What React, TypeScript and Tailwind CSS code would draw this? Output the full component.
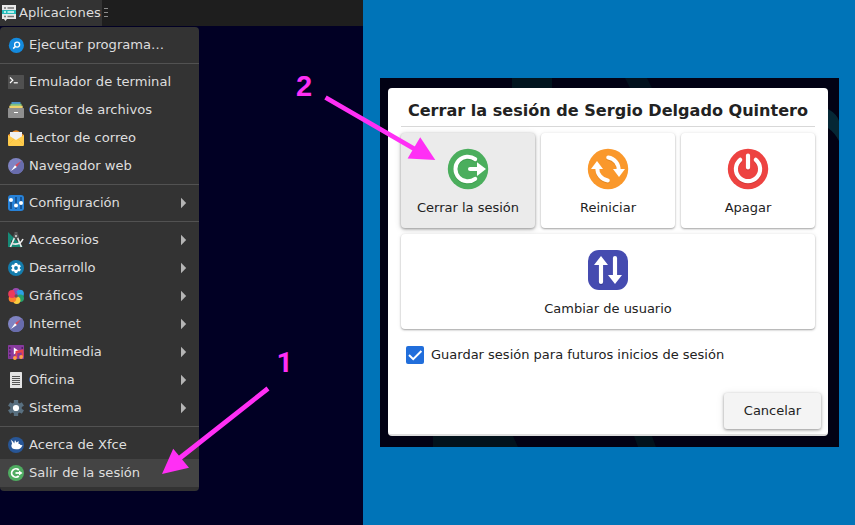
import React from "react";

const SANS = "font-['DejaVu_Sans','Liberation_Sans',sans-serif]";

type IconName =
  | "search" | "terminal" | "files" | "mail" | "compass" | "settings" | "accessories"
  | "dev" | "graphics" | "media" | "office" | "system" | "xfce" | "logout";

function MenuIcon({ name }: { name: IconName }) {
  return (
    <svg viewBox="0 0 16 16" className="h-4 w-4 shrink-0">
      {name === "search" && (
        <>
          <circle cx="8.4" cy="8.4" r="7.6" fill="#148ade" />
          <circle cx="9.1" cy="7.6" r="2.5" fill="none" stroke="#fff" strokeWidth="1.3" />
          <path d="M7.3 9.5 5.2 11.6" stroke="#fff" strokeWidth="1.5" />
        </>
      )}
      {name === "terminal" && (
        <>
          <rect x="0" y="1" width="16" height="14" rx=".5" fill="#505050" />
          <path d="M2 3.5 4.8 6.3 2 9" fill="none" stroke="#fff" strokeWidth="1.2" />
          <path d="M5.8 8.8h4" stroke="#fff" strokeWidth="1.2" />
        </>
      )}
      {name === "files" && (
        <>
          <path d="M3.5 0h9v3h-9z" fill="#4b91ca" />
          <path d="M2.4 1.8h11.2v3H2.4z" fill="#79c083" />
          <path d="M1.3 3.7h13.4V7H1.3z" fill="#edd16a" />
          <rect y="6" width="16" height="10" rx=".7" fill="#8f8f8f" />
          <path d="M6 10.5h4" stroke="#fff" strokeWidth="1" />
        </>
      )}
      {name === "mail" && (
        <>
          <path d="M0 5 6 .8Q8-.5 10 .8L16 5v9H0z" fill="#e98c28" />
          <path d="M2 2h12v9H2z" fill="#f1f1f1" />
          <path d="M0 5 8 10l8-5v10q0 1-1 1H1q-1 0-1-1z" fill="#ffcc4d" />
          <path d="m0 15 6-6M16 15l-6-6" stroke="#f5bc39" strokeWidth=".6" />
        </>
      )}
      {name === "compass" && (
        <>
          <circle cx="8" cy="8" r="8" fill="#7f83c2" />
          <path d="M2.3 13.7a8 8 0 0 0 11.4 0 8 8 0 0 0 0-11.4z" fill="#686cac" />
          <path d="M13 3 7 7.2 8.8 9z" fill="#d8485a" />
          <path d="M3 13 7 7.2 8.8 9z" fill="#fff" />
        </>
      )}
      {name === "settings" && (
        <>
          <rect width="16" height="16" rx="3" fill="#2782d8" />
          <path d="M3 6v8M8 2v8M13 2v5M8 12v2M13 9v5" stroke="#154f8e" strokeWidth="1.8" />
          <circle cx="3" cy="5" r="2" fill="#fff" />
          <circle cx="8" cy="10.5" r="2" fill="#fff" />
          <circle cx="13" cy="8" r="2" fill="#fff" />
        </>
      )}
      {name === "accessories" && (
        <>
          <path d="M0 0 15 15H0z" fill="#168b78" />
          <path d="M3 8v4h4z" fill="#333" />
          <path d="M8 0v5" stroke="#5f5f5f" strokeWidth="3" />
          <path d="M7.3 4 2.4 15M8.8 4l4.6 11" stroke="#e8e8e8" strokeWidth="1.7" />
          <path d="M4.5 11.7Q12 13.5 15 7" fill="none" stroke="#eee" strokeWidth="1.6" />
          <circle cx="8" cy="4" r="2.6" fill="#555" />
          <circle cx="8" cy="4" r=".9" fill="#eee" />
        </>
      )}
      {name === "dev" && (
        <>
          <circle cx="8" cy="8" r="8" fill="#147cac" />
          <path d="M8 3v10M3.7 5.5l8.6 5M3.7 10.5l8.6-5" stroke="#fff" strokeWidth="2.6" />
          <circle cx="8" cy="8" r="3.9" fill="#fff" />
          <circle cx="8" cy="8" r="1.9" fill="#147cac" />
        </>
      )}
      {name === "graphics" && (
        <>
          <circle cx="8" cy="4" r="3.9" fill="#9a4bb0" />
          <circle cx="12" cy="5.7" r="3.9" fill="#2ca1e4" />
          <circle cx="12.3" cy="10.2" r="3.7" fill="#24a16e" />
          <circle cx="8.7" cy="12.3" r="3.7" fill="#f9cb3e" />
          <circle cx="4.5" cy="10.5" r="3.8" fill="#fa812e" />
          <circle cx="4.1" cy="6" r="3.9" fill="#ec3a5c" />
          <path d="M6 2.6a3.9 3.9 0 0 1 3.5 4.5L8 8z" fill="#7956bd" />
          <circle cx="8.2" cy="8" r="1.7" fill="#704e54" />
        </>
      )}
      {name === "media" && (
        <>
          <rect y="1" width="16" height="14" rx=".7" fill="#873a9e" />
          <path d="M1.8 3v11M14.2 3v5" stroke="#4e2261" strokeWidth="1.4" strokeDasharray="2 1.6" />
          <path d="M5.8 3.5 11 7l-5.2 3.5z" fill="#fff" />
          <path d="M8.4 14V7.8L14.6 6.4v6.5M8.4 8.6l6.2-1.4" fill="none" stroke="#e6434c" strokeWidth="1.8" />
          <circle cx="6.9" cy="14" r="1.9" fill="#ffa044" />
          <circle cx="13.1" cy="13" r="1.9" fill="#ffa044" />
        </>
      )}
      {name === "office" && (
        <>
          <rect x="2" width="12" height="16" rx=".6" fill="#e4e4e4" />
          <path d="M4 4.5h8M4 6.5h8M4 8.5h8M4 10.5h8M4 12.5h8" stroke="#444" strokeWidth=".9" />
        </>
      )}
      {name === "system" && (
        <>
          <path d="M8 0v16M1.1 4l13.8 8M1.1 12l13.8-8" stroke="#597080" strokeWidth="4.3" />
          <circle cx="8" cy="8" r="5.8" fill="#597080" />
          <circle cx="8" cy="8" r="3.1" fill="#fff" />
        </>
      )}
      {name === "xfce" && (
        <>
          <circle cx="8" cy="8" r="8" fill="#285696" />
          <path d="m3 2.8 2.2 2 1 1.8L7 3l1.5 2.6L10.6 4l-.1 2.7c1 .1 1.5.5 2 1.2l2 .4-1.3 2.2C12 12 10.5 12.4 8 12.3c-3 0-4.5-1.3-4.7-3.6L4 6.5z" fill="#fff" />
        </>
      )}
      {name === "logout" && (
        <>
          <circle cx="8" cy="8" r="8" fill="#4fac61" />
          <path d="M10.8 5A4.2 4.2 0 1 0 10.8 11" fill="none" stroke="#fff" strokeWidth="1.8" />
          <path d="M7.5 8h4" stroke="#fff" strokeWidth="1.8" />
          <path d="M11 5.4 14.5 8 11 10.6z" fill="#fff" />
        </>
      )}
    </svg>
  );
}

function Item({ icon, label, sub, active }: { icon: IconName; label: string; sub?: boolean; active?: boolean }) {
  return (
    <div className={`flex h-7 items-center pl-2 pr-3 ${active ? "bg-[#444444]" : ""}`}>
      <MenuIcon name={icon} />
      <span className="ml-[5px] flex-1 whitespace-nowrap pb-px">{label}</span>
      {sub && (
        <svg viewBox="0 0 6 12" className="h-3 w-[6px]">
          <path d="M0 .8 5.2 6 0 11.2z" fill="#b5b5b5" />
        </svg>
      )}
    </div>
  );
}

function Separator() {
  return (
    <div className="flex h-[9px] items-center">
      <div className="h-px w-full bg-[#525252]" />
    </div>
  );
}

function Card({ label, active, children }: { label: string; active?: boolean; children: React.ReactNode }) {
  return (
    <div
      className={`flex h-[95px] flex-col items-center rounded-[4px] pt-[15px] ${active ? "bg-[#ebebeb] shadow-[0_1px_3px_rgba(0,0,0,0.38),0_1px_7px_rgba(0,0,0,0.14)]" : "bg-white shadow-[0_1px_2px_rgba(0,0,0,0.34),0_0_5px_rgba(0,0,0,0.07)]"}`}
    >
      <svg viewBox="0 0 42 42" className="h-[42px] w-[42px]">{children}</svg>
      <span className="mt-[9px] whitespace-nowrap leading-[18px]">{label}</span>
    </div>
  );
}

function LogoutDialog() {
  return (
    <div className="relative ml-[17px] mt-[78px] h-[369px] w-[459px] bg-[#020214] pl-2 pt-[10px]">
      <svg viewBox="0 0 459 369" className="absolute inset-0 h-full w-full">
        <path d="M132 0h40v10h-40z" fill="#02151f" />
        <path d="M245 0h22l5 10h-22z" fill="#02111d" />
        <path d="M448 31q9 5 11 12v20q-4-8-11-13z" fill="#052735" />
        <path d="M53 358h80l5 11H53zM254 358h18l4 11h-18z" fill="#02121c" />
      </svg>
      <div className="relative flex h-[348px] w-[440px] flex-col rounded-[4px] border-b-2 border-[#dedede] bg-white px-[13px] text-[13px] text-[#222222]">
        <h1 className="flex h-[39px] items-center justify-center whitespace-nowrap border-b border-[#d8d8d8] pt-[8px] text-[16.07px] font-bold leading-[20px]">
          Cerrar la sesión de Sergio Delgado Quintero
        </h1>
        <div className="mt-[6px] grid grid-cols-3 gap-[6px]">
          <Card label="Cerrar la sesión" active>
            <circle cx="21" cy="21" r="20.2" fill="#4bae5d" />
            <path d="M28.2 11.2A12.3 12.3 0 1 0 28.2 30.8" transform="translate(0 1)" fill="none" stroke="#278438" strokeOpacity=".4" strokeWidth="4" strokeLinecap="round" />
            <path d="M28.2 11.2A12.3 12.3 0 1 0 28.2 30.8" fill="none" stroke="#fff" strokeWidth="4" strokeLinecap="round" />
            <path d="M23 21h9" stroke="#fff" strokeWidth="4" strokeLinecap="round" />
            <path d="m30 14.3 9 6.7-9 7z" fill="#fff" />
          </Card>
          <Card label="Reiniciar">
            <circle cx="21" cy="21" r="20.2" fill="#fa982b" />
            <path d="M10.4 19.5A12 12 0 0 0 20.8 32.5M21.2 9.5A12 12 0 0 1 31.6 22.5" transform="translate(0 1)" fill="none" stroke="#b96b12" strokeOpacity=".4" strokeWidth="4" strokeLinecap="round" />
            <path d="M10.4 19.5A12 12 0 0 0 20.8 32.5M21.2 9.5A12 12 0 0 1 31.6 22.5" fill="none" stroke="#fff" strokeWidth="4" strokeLinecap="round" />
            <path d="m10 13 6 8H4zM32 29l6-8H26z" fill="#fff" />
          </Card>
          <Card label="Apagar">
            <circle cx="21" cy="21" r="20.2" fill="#ed4341" />
            <path d="M13.2 11.8A12.1 12.1 0 1 0 28.8 11.8M21 7.5v12" transform="translate(0 1)" fill="none" stroke="#a92525" strokeOpacity=".4" strokeWidth="4.2" strokeLinecap="round" />
            <path d="M13.2 11.8A12.1 12.1 0 1 0 28.8 11.8M21 7.5v12" fill="none" stroke="#fff" strokeWidth="4.2" strokeLinecap="round" />
          </Card>
        </div>
        <div className="mt-[6px]">
          <Card label="Cambiar de usuario">
            <rect x="1" y="1" width="40" height="40" rx="11" fill="#454bb0" />
            <path d="M14 13v20M28 9v20" transform="translate(0 1)" stroke="#292e80" strokeOpacity=".5" strokeWidth="4.5" strokeLinecap="round" />
            <path d="M14 13v20M28 9v20" stroke="#fff" strokeWidth="4.2" strokeLinecap="round" />
            <path d="m14 7 7 9H7zM28 35l7-9H21z" fill="#fff" />
          </Card>
        </div>
        <div className="mt-[17px] flex h-[18px] items-center pl-[5px]">
          <div className="h-[18px] w-[18px] rounded-[2px] bg-[#216edb]">
            <svg viewBox="0 0 18 18" className="h-[18px] w-[18px]">
              <path d="m3 9 4.2 4.2L15.4 5" fill="none" stroke="#fff" strokeWidth="2" />
            </svg>
          </div>
          <span className="ml-[7px] whitespace-nowrap pb-px">Guardar sesión para futuros inicios de sesión</span>
        </div>
        <div className="-mr-[6px] mt-[29px] flex h-9 w-[97px] items-center justify-center self-end rounded-[3px] bg-[#f4f4f4] pb-px shadow-[0_1px_3px_rgba(0,0,0,0.38),0_1px_9px_rgba(0,0,0,0.1)]">
          Cancelar
        </div>
      </div>
    </div>
  );
}

function Annotations() {
  return (
    <svg viewBox="0 0 855 525" className="pointer-events-none absolute inset-0 h-[525px] w-[855px]">
      <g fill="#ff2ff5" stroke="#ff2ff5">
        <path d="M325.5 97.5 418 151M268 388.5l-90 71" strokeWidth="4.8" />
        <path d="M435.3 160 420.2 137.2 407.6 158.5zM162 474 173.2 448.8 189 467.8z" stroke="none" />
      </g>
      <g fill="#ff2ff5" className="font-bold">
        <text x="296" y="96" className="font-['Liberation_Sans',sans-serif] text-[29px]">2</text>
        <text x="276.5" y="372" className="font-['Roboto','Liberation_Sans',sans-serif] text-[28.5px]">1</text>
      </g>
    </svg>
  );
}

export default function App() {
  return (
    <div className={`relative flex h-[525px] w-[855px] overflow-hidden bg-[#0074b8] ${SANS}`}>
      <div className="h-full w-[363px] bg-[#010024] text-[13.1px] text-[#dedede]">
        <div className="flex h-[26px] bg-[#1e1e1e]">
          <div className="flex h-full w-[102px] items-center bg-[#333333] pl-[2px]">
            <svg viewBox="0 0 14 16" className="h-4 w-[14px] shrink-0">
              <path d="M0 0h14v14H5l-1.5 2L2 14H0z" fill="#e9e9e9" />
              <path d="M0 5h14v4H0z" fill="#27bdbb" />
              <path d="M2 3h2m1.5 0H12M2 11.5h2m1.5 0H12" stroke="#777" strokeWidth="1.5" />
              <path d="M2 7h2m1.5 0H12" stroke="#e9ffff" strokeWidth="1.4" />
            </svg>
            <span className="ml-[3px] whitespace-nowrap pb-px">Aplicaciones</span>
          </div>
          <svg viewBox="0 0 6 26" className="ml-px h-[26px] w-[6px]">
            <path d="M1 8.5h4M1 12.5h4M1 16.5h4" stroke="#8c8c8c" strokeWidth="1" />
          </svg>
        </div>
        <div className="mt-px w-[199px] rounded-[4px] bg-[#333333] py-1">
          <Item icon="search" label="Ejecutar programa…" />
          <Separator />
          <Item icon="terminal" label="Emulador de terminal" />
          <Item icon="files" label="Gestor de archivos" />
          <Item icon="mail" label="Lector de correo" />
          <Item icon="compass" label="Navegador web" />
          <Separator />
          <Item icon="settings" label="Configuración" sub />
          <Separator />
          <Item icon="accessories" label="Accesorios" sub />
          <Item icon="dev" label="Desarrollo" sub />
          <Item icon="graphics" label="Gráficos" sub />
          <Item icon="compass" label="Internet" sub />
          <Item icon="media" label="Multimedia" sub />
          <Item icon="office" label="Oficina" sub />
          <Item icon="system" label="Sistema" sub />
          <Separator />
          <Item icon="xfce" label="Acerca de Xfce" />
          <Item icon="logout" label="Salir de la sesión" active />
        </div>
      </div>
      <LogoutDialog />
      <Annotations />
    </div>
  );
}
